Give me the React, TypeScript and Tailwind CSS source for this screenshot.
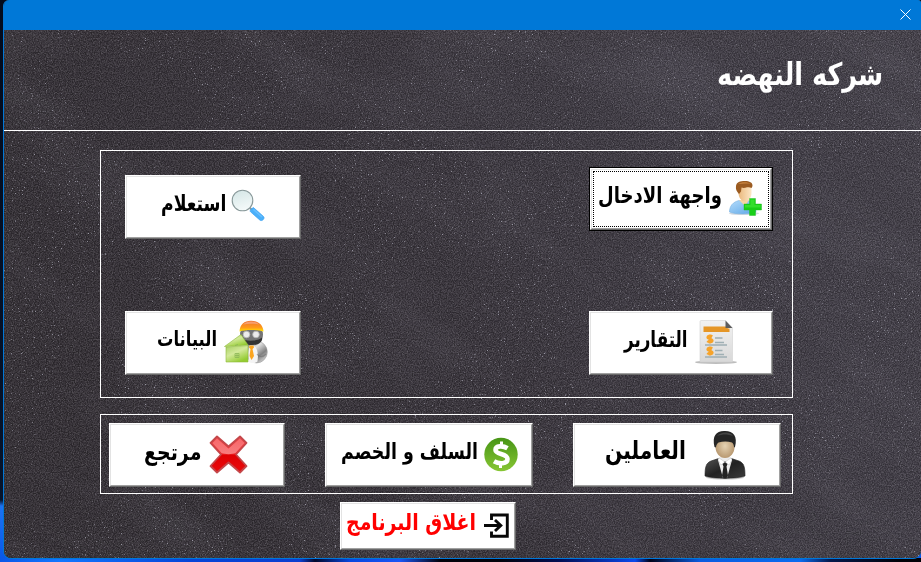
import React, { useLayoutEffect, useRef, useState } from "react";

type LabelProps = { text: string; width: number; className: string };

/* Text stretched horizontally so that its advance fills the given width. */
function Label({ text, width, className }: LabelProps) {
  const ref = useRef<HTMLSpanElement>(null);
  const [scale, setScale] = useState(1);
  useLayoutEffect(() => {
    if (ref.current && ref.current.offsetWidth) setScale(width / ref.current.offsetWidth);
  }, [width]);
  return (
    <div dir="ltr" className="flex shrink-0 justify-start" style={{ width }}>
      <span
        ref={ref}
        dir="rtl"
        className={`inline-block shrink-0 origin-left whitespace-nowrap ${className}`}
        style={{ transform: `scaleX(${scale})` }}
      >
        {text}
      </span>
    </div>
  );
}

type ButtonProps = { className: string; focused?: boolean; children: React.ReactNode };

function BevelButton({ className, focused, children }: ButtonProps) {
  const face = (
    <span className="flex h-full w-full border border-t-white border-l-white border-r-[#696969] border-b-[#696969]">
      <span className="flex h-full w-full border border-t-[#e3e3e3] border-l-[#e3e3e3] border-r-[#a0a0a0] border-b-[#a0a0a0] bg-white">
        {focused ? (
          <span className="m-px flex w-full min-w-0 items-start border border-dotted border-black">{children}</span>
        ) : (
          <span className="flex w-full items-start">{children}</span>
        )}
      </span>
    </span>
  );
  return (
    <button type="button" className={`block shrink-0 ${focused ? "border border-black" : ""} ${className}`}>
      {face}
    </button>
  );
}

function Chalkboard() {
  return (
    <svg className="absolute inset-0 h-full w-full" preserveAspectRatio="none" aria-hidden="true">
      <defs>
        <linearGradient id="board" x1="0" y1="0.3" x2="1" y2="0">
          <stop offset="0" stopColor="#363236" />
          <stop offset="0.4" stopColor="#3c383e" />
          <stop offset="0.75" stopColor="#45424a" />
          <stop offset="1" stopColor="#47444c" />
        </linearGradient>
        <filter id="grain" x="0" y="0" width="100%" height="100%" colorInterpolationFilters="sRGB">
          <feTurbulence type="fractalNoise" baseFrequency="0.85" numOctaves="2" seed="4" />
          <feColorMatrix values="1.2 0.6 0 0 -0.66  1.2 0.6 0 0 -0.68  1.2 0.6 0 0 -0.64  0 0 0 0 0.25" />
        </filter>
        <filter id="smears" x="0" y="0" width="100%" height="100%" colorInterpolationFilters="sRGB">
          <feTurbulence type="fractalNoise" baseFrequency="0.005 0.018" numOctaves="5" seed="14" />
          <feColorMatrix values="0 0 0 0 0.75  0 0 0 0 0.74  0 0 0 0 0.8  1.1 0 0 0 -0.48" />
        </filter>
        <filter id="dust" x="0" y="0" width="100%" height="100%" colorInterpolationFilters="sRGB">
          <feTurbulence type="fractalNoise" baseFrequency="0.7" numOctaves="2" seed="21" result="n" />
          <feColorMatrix in="n" values="0 0 0 0 0.8  0 0 0 0 0.8  0 0 0 0 0.86  0 8 0 0 -5.6" result="spots" />
          <feTurbulence type="fractalNoise" baseFrequency="0.009" numOctaves="2" seed="3" />
          <feColorMatrix values="0 0 0 0 1  0 0 0 0 1  0 0 0 0 1  4 0 0 0 -1.3" result="area" />
          <feComposite in="spots" in2="area" operator="in" />
        </filter>
      </defs>
      <rect width="100%" height="100%" fill="url(#board)" />
      <g transform="rotate(28 460 260)">
        <rect x="-150" y="-250" width="1250" height="1050" filter="url(#smears)" opacity="0.2" />
      </g>
      <rect width="100%" height="100%" filter="url(#grain)" />
      <rect width="100%" height="100%" filter="url(#dust)" opacity="0.6" />
    </svg>
  );
}

function AddUserIcon() {
  return (
    <svg className="mt-[8px] ml-[6px] h-[36px] w-[34px] shrink-0" viewBox="0 0 34 36">
      <defs>
        <linearGradient id="shirt" x1="0" y1="0" x2="1" y2="1">
          <stop offset="0" stopColor="#b5dcfb" /><stop offset="1" stopColor="#5aa5e6" />
        </linearGradient>
        <linearGradient id="skin" x1="0" y1="0" x2="1" y2="0">
          <stop offset="0" stopColor="#eab97e" /><stop offset="1" stopColor="#fde7c6" />
        </linearGradient>
      </defs>
      <ellipse cx="16" cy="33.500" rx="15" ry="1.600" fill="#b7c2cc" opacity="0.6" />
      <path d="M1.500 32C1.500 26 5 22 11 20.500h9c6 1.500 8 5.500 8 11.500-6 2.500-21 2.500-26.500 0z" fill="url(#shirt)" stroke="#78b2e2" strokeWidth="0.6" />
      <path d="M11 20l6 6 4-6z" fill="#f8d5a2" />
      <path d="M10.500 7h13v6c0 4-2.500 8.500-6.500 8.500s-6.500-4.500-6.500-8.500z" fill="url(#skin)" />
      <path d="M8 6C8.500 2 12 1 17 1c4.500 0 7.500 1.500 7.500 4.500 0 1-.3 1.800-1 2.500-1.500-1-3-1-4.500-.7-2 .5-3.500 1-5.500.2l-.5 4-2 2.500C8.500 11.500 7.500 9 8 6z" fill="#9b5b21" />
      <path d="M10 4c4-2.500 9-2.500 13 0-4-.7-9-.3-13 0z" fill="#c98540" />
      <path d="M21.500 18.500h6V24h6v6h-6v5.500h-6V30h-5.500v-6h5.500z" fill="#19cf18" stroke="#17b91a" strokeWidth="0.4" />
      <path d="M22.500 19.500h4V25h6v2.500H17V25h5.500z" fill="#42e639" opacity="0.65" />
    </svg>
  );
}

function MagnifierIcon() {
  return (
    <svg className="mt-[12px] ml-[4px] h-[34px] w-[34px] shrink-0" viewBox="0 0 34 34">
      <defs>
        <linearGradient id="lens" x1="0.3" y1="0" x2="0.6" y2="1">
          <stop offset="0" stopColor="#d6e7e7" /><stop offset="1" stopColor="#f5fafa" />
        </linearGradient>
      </defs>
      <path d="M17.500 17.500l3.500 3.500" stroke="#8b9b9c" strokeWidth="2.200" />
      <circle cx="11.500" cy="11.500" r="10.300" fill="url(#lens)" stroke="#89999a" strokeWidth="1.100" />
      <path d="M22.700 18.800l9.600 8.500c1 1 1 2 .1 3.100s-2.400 1.600-3.400.8L19.500 22.800c-.5-.5-.4-1.200 0-1.700l1.900-2c.4-.5.900-.7 1.300-.3z" fill="#4bb0fa" stroke="#3fa2f0" strokeWidth="0.7" />
      <path d="M22.500 20.500l8.500 7.500" stroke="#66bfff" strokeWidth="1.600" />
    </svg>
  );
}

function PenguinIcon() {
  return (
    <svg className="mt-[7px] ml-[7px] h-[44px] w-[44px] shrink-0" viewBox="0 0 44 44">
      <defs>
        <linearGradient id="body" x1="0" y1="0" x2="0.8" y2="1">
          <stop offset="0" stopColor="#444" /><stop offset="0.4" stopColor="#e2e2e2" /><stop offset="0.72" stopColor="#808080" /><stop offset="1" stopColor="#ddd" />
        </linearGradient>
        <linearGradient id="hat" x1="0" y1="0" x2="0" y2="1">
          <stop offset="0" stopColor="#ee7030" /><stop offset="0.65" stopColor="#ff9c19" /><stop offset="1" stopColor="#ffea00" />
        </linearGradient>
        <linearGradient id="house" x1="0" y1="0" x2="0.6" y2="1">
          <stop offset="0" stopColor="#a6cf62" /><stop offset="0.5" stopColor="#d3e99a" /><stop offset="1" stopColor="#94cc32" />
        </linearGradient>
      </defs>
      <ellipse cx="32.500" cy="32" rx="10.800" ry="11" fill="url(#body)" stroke="#999" strokeWidth="0.500" />
      <ellipse cx="27.500" cy="14.500" rx="11.500" ry="10.500" fill="#757575" />
      <path d="M17 18.500c4 3 17 3 21-1 1 3-2 7.500-10 7.500-7 0-10-2-11-6.500z" fill="#333" />
      <path d="M25 26c7-2 10 4 8.500 15.500-2 2-7 2-9 0z" fill="#f4f4f4" />
      <path d="M15.500 11.500C16 4.500 20 .8 27 .8s12 3.700 12.500 10.700c-6-2-18-2-24 0z" fill="url(#hat)" />
      <path d="M19 4.500c4-4 12-4 16 0-5-1-11-1-16 0z" fill="#f7ad8d" opacity="0.7" />
      <circle cx="22.500" cy="14.500" r="3.300" fill="#ececec" stroke="#b5b5b5" strokeWidth="0.800" />
      <circle cx="32" cy="14.500" r="3.300" fill="#ececec" stroke="#b5b5b5" strokeWidth="0.800" />
      <path d="M.5 26.500L17 14.500 24 25z" fill="url(#house)" stroke="#8fba3b" strokeWidth="0.600" />
      <path d="M2 27l22-1.500v16.500H2z" fill="url(#house)" stroke="#8fba3b" strokeWidth="0.600" />
      <path d="M11 33.500h4v4h-4zM11 35.500h4M13 33.500v4M11 25.500l3-1" fill="none" stroke="#86b254" strokeWidth="0.700" />
      <path d="M25.500 25.500h4l.5 2-1.500 1.500 1.500 7-2.500 4-2-4 1-7-1.500-1.500z" fill="#fca51f" />
      <path d="M33 34c2 3.500 6 3.500 9 0" fill="none" stroke="#666" strokeWidth="1.200" opacity="0.5" />
    </svg>
  );
}

function ReportIcon() {
  return (
    <svg className="mt-[7px] ml-[7px] h-[45px] w-[42px] shrink-0" viewBox="0 0 42 45">
      <defs>
        <linearGradient id="sheet" x1="0" y1="0" x2="0" y2="1">
          <stop offset="0" stopColor="#f2f2f2" /><stop offset="1" stopColor="#d8d8d8" />
        </linearGradient>
      </defs>
      <ellipse cx="21" cy="42.300" rx="21" ry="1.700" fill="#a5a5a5" opacity="0.750" />
      <path d="M6 .5h24.500l7 7.500v34H5V1.500C5 1 5.500.5 6 .5z" fill="url(#sheet)" stroke="#d2d2d2" strokeWidth="0.600" />
      <path d="M8.500 6.500H31l2 2h1.500V12h-26z" fill="#e59627" />
      <path d="M30.500.5l7 7.500h-7z" fill="#5c5c5c" />
      <path d="M20 18h7.500M20 22.500h9M10 25h22M20 30.500h7.500M20 34.500h9M10 37h22" stroke="#9fafb4" strokeWidth="1.300" />
      <g fill="none" stroke="#f6a32a" strokeWidth="2.600">
        <path d="M17.300 16.500c-2-1-4.600-.8-4.600.8 0 2 4.600 1.200 4.600 3.200 0 1.800-3.600 1.800-5 .6M15 14.500v9" />
        <path d="M17.300 28.500c-2-1-4.600-.8-4.600.8 0 2 4.600 1.200 4.600 3.200 0 1.800-3.600 1.800-5 .6M15 26.500v9" />
      </g>
    </svg>
  );
}

function CrossIcon() {
  return (
    <svg className="mt-[10px] ml-[8px] h-[39px] w-[39px] shrink-0" viewBox="0 0 39 39">
      <defs>
        <linearGradient id="red" x1="0" y1="0" x2="0" y2="1">
          <stop offset="0" stopColor="#f0484b" /><stop offset="0.48" stopColor="#ef2a2d" /><stop offset="0.52" stopColor="#df0003" /><stop offset="1" stopColor="#ea0a0b" />
        </linearGradient>
        <linearGradient id="gloss" x1="0" y1="0" x2="0" y2="1">
          <stop offset="0" stopColor="#ff8a8c" /><stop offset="1" stopColor="#ffd0d0" />
        </linearGradient>
      </defs>
      <path d="M8 1.500L19.500 11.500 31 1.500 37.500 8 27 19.500 37.500 31 31 37.500 19.500 27.500 8 37.500 1.500 31 12 19.500 1.500 8z" fill="url(#red)" stroke="#c4474a" strokeWidth="1.800" strokeLinejoin="round" />
      <path d="M8 3.500L19.500 13.500 31 3.500 35.500 8 26.500 18c-4 1.500-10 1.500-14 0L3.500 8z" fill="url(#gloss)" opacity="0.500" />
    </svg>
  );
}

function DollarIcon() {
  return (
    <svg className="mt-[12px] ml-[6px] h-[35px] w-[34px] shrink-0" viewBox="0 0 34 35">
      <defs>
        <linearGradient id="coin" x1="0" y1="0" x2="0" y2="1">
          <stop offset="0" stopColor="#479516" /><stop offset="1" stopColor="#87c634" />
        </linearGradient>
      </defs>
      <circle cx="17" cy="17.500" r="16.700" fill="url(#coin)" />
      <path d="M23.500 11.300C19 8.500 11.500 8.500 11.500 13c0 5 12 3 12 9 0 5.200-8.500 5.200-13.500 2.200" fill="none" stroke="#fff" strokeWidth="4.600" />
      <path d="M17.500 4.500v6M16.500 25v6" stroke="#fff" strokeWidth="3" />
    </svg>
  );
}

function BusinessmanIcon() {
  return (
    <svg className="mt-[5px] ml-[18px] h-[50px] w-[42px] shrink-0" viewBox="0 0 42 50">
      <defs>
        <linearGradient id="suit" x1="0" y1="0" x2="1" y2="1">
          <stop offset="0" stopColor="#555" /><stop offset="0.5" stopColor="#222" /><stop offset="1" stopColor="#3c3c3c" />
        </linearGradient>
        <radialGradient id="face"><stop offset="0" stopColor="#e6d3b3" /><stop offset="1" stopColor="#b99a72" /></radialGradient>
      </defs>
      <ellipse cx="21" cy="47.500" rx="19" ry="2" fill="#999" opacity="0.500" />
      <path d="M1 46c0-9 1-13 6-15l9-3h10l9 3c5 2 6 6 6 15-8 3-32 3-40 0z" fill="url(#suit)" stroke="#222" strokeWidth="0.600" />
      <path d="M15 27h12l1 3-5 18h-4l-5-18z" fill="#ededed" />
      <path d="M19 31.500h4l.7 2-1.200 3 1.500 9-1.500 3h-3l-1.500-3 1.500-9-1.200-3z" fill="#222" />
      <path d="M15 28l6 4-4 3-3-5zM27 28l-6 4 4 3 3-5z" fill="#fff" stroke="#999" strokeWidth="0.300" />
      <path d="M11.500 12c0-5 3-8 9.500-8s9.500 3 9.500 8v5c0 6-4 11-9.500 11s-9.500-5-9.500-11z" fill="url(#face)" />
      <path d="M10.500 17C8 6 12 1 20 1c9-.5 14 5 11 16l-1 .5c0-2.500-.5-3.500-2-5-4.500-1.500-9-1.500-13.500 0-1.500 1.500-2.500 2.500-2.500 5z" fill="#252525" />
      <path d="M13 6c4-4 12-5 16 0-6-2-10-2-16 0z" fill="#5a5a5a" opacity="0.600" />
    </svg>
  );
}

function ExitIcon() {
  return (
    <svg className="mt-[9px] ml-[8px] h-[26px] w-[26px] shrink-0" viewBox="0 0 26 26" fill="none" stroke="#080808" strokeWidth="2.900">
      <path d="M7.500 7V2h15.800v21.200H7.500V18.500" />
      <path d="M0 12.500h16.500M11 7l5.800 5.500L11 18" />
    </svg>
  );
}

export default function App() {
  return (
    <div className="flex h-[562px] w-[921px] flex-col overflow-hidden bg-[linear-gradient(90deg,#0a57e8_0px,#1277ff_60px,#0645d8_190px,#0b3fd0_300px,#02082c_315px,#0747df_350px,#1a55f5_400px,#02030c_440px,#02030c_500px,#020f55_560px,#0a49ed_635px,#00031b_650px,#0a5ce0_700px,#0a6cf0_800px,#04194d_830px,#010208_900px)] font-['DejaVu_Sans',sans-serif]">
      <div className="flex h-[558px] w-full bg-[linear-gradient(180deg,#030b1c_0px,#06142b_500px,#1d73f2_506px,#0a58e8_558px)] pl-[3px]">
        <main className="flex h-[559px] w-[918px] shrink-0 flex-col overflow-hidden rounded-tl-[6px] rounded-tr-[3px] rounded-b-[8px] border-b border-l border-[#0078d7] bg-[#3c393f]">
          <header className="flex h-[30px] shrink-0 items-start justify-end bg-[#0078d7] pt-[9px] pr-[10px]">
            <svg className="h-[11px] w-[11px]" viewBox="0 0 11 11" stroke="#fff" strokeWidth="1"><path d="M.5.5l10 10M10.500.5l-10 10" /></svg>
          </header>
          <div className="relative flex min-h-0 flex-1 flex-col">
            <Chalkboard />
            <div className="relative flex h-[101px] shrink-0 items-start border-b border-white pt-[22px] pl-[713px]">
              <Label text="شركه النهضه" width={166} className="text-[31px] leading-[44px] font-bold text-white" />
            </div>
            <section className="relative mt-[19px] ml-[96px] flex h-[248px] w-[693px] shrink-0 justify-between border border-white pr-[19px] pl-[24px]">
              <div className="flex flex-col pt-[24px]">
                <BevelButton className="h-[64px] w-[176px]">
                  <span className="mt-[9px] ml-[34px]"><Label text="استعلام" width={65} className="text-[22px] leading-[36px] font-bold" /></span>
                  <span className="ml-px"><MagnifierIcon /></span>
                </BevelButton>
                <BevelButton className="mt-[72px] h-[64px] w-[176px]">
                  <span className="mt-[8px] ml-[30px]"><Label text="البيانات" width={60} className="text-[21px] leading-[36px] font-bold" /></span>
                  <PenguinIcon />
                </BevelButton>
              </div>
              <div className="flex flex-col pt-[16px]">
                <BevelButton focused className="h-[64px] w-[184px]">
                  <span className="mt-[5px] ml-[4px]"><Label text="واجهة الادخال" width={124} className="text-[23px] leading-[36px] font-bold" /></span>
                  <AddUserIcon />
                </BevelButton>
                <BevelButton className="mt-[80px] h-[64px] w-[184px]">
                  <span className="mt-[9px] ml-[33px]"><Label text="التقارير" width={64} className="text-[22px] leading-[36px] font-bold" /></span>
                  <ReportIcon />
                </BevelButton>
              </div>
            </section>
            <section className="relative mt-[16px] ml-[96px] flex h-[80px] w-[693px] shrink-0 gap-[40px] border border-white pt-[8px] pl-[8px]">
              <BevelButton className="h-[64px] w-[176px]">
                <span className="mt-[9px] ml-[33px]"><Label text="مرتجع" width={57} className="text-[23px] leading-[36px] font-bold" /></span>
                <CrossIcon />
              </BevelButton>
              <BevelButton className="h-[64px] w-[208px]">
                <span className="mt-[9px] ml-[14px]"><Label text="السلف و الخصم" width={137} className="text-[22px] leading-[36px] font-bold" /></span>
                <DollarIcon />
              </BevelButton>
              <BevelButton className="h-[64px] w-[208px]">
                <span className="mt-[8px] ml-[30px]"><Label text="العاملين" width={81} className="text-[25px] leading-[36px] font-bold" /></span>
                <BusinessmanIcon />
              </BevelButton>
            </section>
            <div className="relative mt-[8px] ml-[336px] flex">
              <BevelButton className="h-[48px] w-[176px]">
                <span className="ml-[4px]"><Label text="اغلاق البرنامج" width={130} className="text-[23px] leading-[36px] font-bold text-[#ff0000]" /></span>
                <ExitIcon />
              </BevelButton>
            </div>
          </div>
        </main>
      </div>
    </div>
  );
}
